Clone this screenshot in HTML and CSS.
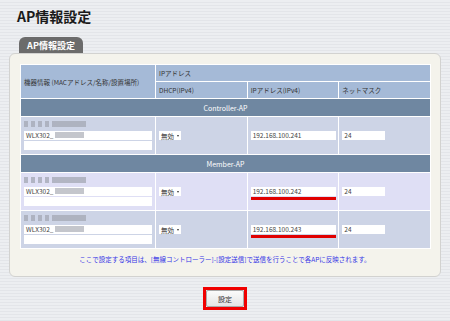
FILE: index.html
```html
<!DOCTYPE html>
<html lang="ja">
<head>
    <meta charset="UTF-8">
    <title>AP情報設定</title>
    <link rel="stylesheet" href="styles.css">
</head>
<body>
    <h1 class="page-title">AP情報設定</h1>
    <div class="tab">AP情報設定</div>

    <div class="panel">
        <table class="ap-table">
            <tr class="head">
                <th rowspan="2" class="col-info">機器情報 (MACアドレス/名称/設置場所)</th>
                <th colspan="3">IPアドレス</th>
            </tr>
            <tr class="head">
                <th class="col-dhcp">DHCP(IPv4)</th>
                <th class="col-ip">IPアドレス(IPv4)</th>
                <th class="col-mask">ネットマスク</th>
            </tr>

            <tr class="section"><td colspan="4">Controller-AP</td></tr>
            <tr class="ap-row row-blue">
                <td class="info-cell">
                    <div class="mac"><span class="dots"></span><span class="blur"></span></div>
                    <div class="field">WLX302_<span class="blur-in"></span></div>
                    <div class="field"></div>
                </td>
                <td><span class="select">無効 <i class="caret"></i></span></td>
                <td><div class="field ip">192.168.100.241</div></td>
                <td><div class="field mask">24</div></td>
            </tr>

            <tr class="section"><td colspan="4">Member-AP</td></tr>
            <tr class="ap-row row-lilac">
                <td class="info-cell">
                    <div class="mac"><span class="dots"></span><span class="blur"></span></div>
                    <div class="field">WLX302_<span class="blur-in"></span></div>
                    <div class="field"></div>
                </td>
                <td><span class="select">無効 <i class="caret"></i></span></td>
                <td><div class="field ip marked">192.168.100.242</div></td>
                <td><div class="field mask">24</div></td>
            </tr>
            <tr class="ap-row row-blue">
                <td class="info-cell">
                    <div class="mac"><span class="dots"></span><span class="blur"></span></div>
                    <div class="field">WLX302_<span class="blur-in"></span></div>
                    <div class="field"></div>
                </td>
                <td><span class="select">無効 <i class="caret"></i></span></td>
                <td><div class="field ip marked">192.168.100.243</div></td>
                <td><div class="field mask">24</div></td>
            </tr>
        </table>

        <p class="note">ここで設定する項目は、[無線コントローラー]-[設定送信]で送信を行うことで各APに反映されます。</p>
    </div>

    <div class="actions">
        <span class="highlight"><button class="btn" type="button">設定</button></span>
    </div>
</body>
</html>
```

FILE: styles.css
```css
* {
    margin: 0;
    padding: 0;
    box-sizing: border-box;
}

body {
    font-family: "Noto Sans CJK JP", "Noto Sans", sans-serif;
    color: #333;
    background: repeating-linear-gradient(180deg, #eceef1 0 2px, #e3e5e9 2px 3px);
    min-height: 100vh;
}

.page-title {
    font-size: 14px;
    font-weight: bold;
    line-height: 20px;
    color: #1a1a1a;
    padding: 6px 0 0 17px;
}

.tab {
    width: 64px;
    height: 16px;
    margin: 11px 0 0 19px;
    background: #6b6b6b;
    border-radius: 6px 6px 0 0;
    color: #fff;
    font-size: 9px;
    font-weight: bold;
    line-height: 17px;
    text-align: center;
}

.panel {
    width: 432px;
    margin-left: 9px;
    padding: 10px 10px 12px;
    background: #f4f3ec;
    border: 1px solid #d2d2d0;
    border-radius: 6px;
}

.ap-table {
    width: 411px;
    border-collapse: collapse;
    table-layout: fixed;
    font-size: 6.5px;
}

.ap-table th,
.ap-table td {
    border: 1px solid #fff;
    padding: 0 3px;
    text-align: left;
    font-weight: normal;
}

.head th {
    background: #a5bad7;
    color: #333;
    height: 17px;
}

.col-info { width: 135px; }
.col-dhcp,
.col-ip,
.col-mask { width: 92px; }

.section td {
    background: #6f87a1;
    color: #fff;
    text-align: center;
    height: 18px;
    font-size: 7px;
}

.ap-row td {
    height: 38px;
    vertical-align: middle;
}

.row-blue td { background: #cdd4e6; }
.row-lilac td { background: #dfdff5; }

.mac {
    display: flex;
    height: 6px;
    margin-bottom: 4px;
}

.dots {
    width: 32px;
    height: 6px;
    background: repeating-linear-gradient(90deg, #a6aab7 0 4px, transparent 4px 7px);
    opacity: 0.8;
}

.blur {
    width: 30px;
    height: 6px;
    background: #a6aab7;
    opacity: 0.8;
}

.field {
    display: flex;
    align-items: center;
    height: 9px;
    background: #fff;
    color: #444;
    font-size: 6.5px;
    padding-left: 2px;
    margin-bottom: 1px;
    width: 128px;
}

.blur-in {
    width: 29px;
    height: 6px;
    margin-left: 2px;
    background: #c4c6cc;
}

.field.ip { width: 85px; }
.field.mask { width: 43px; }

.marked {
    position: relative;
}

.marked::after {
    content: "";
    position: absolute;
    left: 0;
    right: 0;
    bottom: -4px;
    height: 3px;
    background: #e00000;
}

.select {
    display: inline-flex;
    align-items: center;
    gap: 3px;
    height: 9px;
    padding: 0 2px;
    background: #fff;
    color: #333;
    font-size: 6.5px;
}

.caret {
    width: 0;
    height: 0;
    border-left: 1.5px solid transparent;
    border-right: 1.5px solid transparent;
    border-top: 2px solid #333;
}

.note {
    margin-top: 5px;
    font-size: 6.5px;
    line-height: 10px;
    color: #3535e6;
    text-align: center;
}

.actions {
    display: flex;
    justify-content: center;
    margin-top: 10px;
}

.highlight {
    display: inline-flex;
    border: 3px solid #f00000;
}

.btn {
    width: 38px;
    height: 17px;
    font-family: inherit;
    font-size: 7px;
    color: #333;
    background: linear-gradient(#fbfbfb, #e4e4e4);
    border: 1px solid #a9a9a9;
    border-radius: 2px;
}
```
